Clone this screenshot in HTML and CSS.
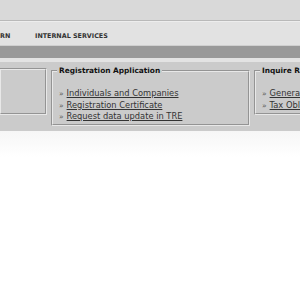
FILE: index.html
```html
<!DOCTYPE html>
<html lang="en">
  <head>
    <meta charset="UTF-8" />
    <title>Services</title>
    <link rel="stylesheet" href="styles.css">
  </head>
  <body>
    <div class="top"></div>
    <div class="nav">
      <span class="nav-item nav-cut">RN</span>
      <span class="nav-item">INTERNAL SERVICES</span>
    </div>
    <div class="band"></div>
    <div class="content">
      <div class="box box-left"></div>
      <fieldset class="box box-mid">
        <legend>Registration Application</legend>
        <ul>
          <li><a href="#">Individuals and Companies</a></li>
          <li><a href="#">Registration Certificate</a></li>
          <li><a href="#">Request data update in TRE</a></li>
        </ul>
      </fieldset>
      <fieldset class="box box-right">
        <legend>Inquire Registration</legend>
        <ul>
          <li><a href="#">General Information</a></li>
          <li><a href="#">Tax Obligations</a></li>
        </ul>
      </fieldset>
    </div>
    <div class="fade"></div>
  </body>
</html>
```

FILE: styles.css
```css
* {
  box-sizing: border-box;
  margin: 0;
  padding: 0;
}

body {
  background: #fff;
  font-family: "DejaVu Sans", Verdana, sans-serif;
  overflow: hidden;
}

.top {
  height: 21px;
  background: #d9d9d9;
  border-bottom: 1px solid #b9b9b9;
}

.nav {
  height: 25px;
  background: #e2e2e2;
  border-top: 1px solid #ededed;
  border-bottom: 1px solid #cfcfcf;
  display: flex;
  align-items: center;
  padding-top: 5px;
  font-size: 6.4px;
  font-weight: bold;
  color: #333;
  white-space: nowrap;
}

.nav-cut {
  width: 35px;
}

.band {
  height: 16px;
  background: #999;
  border-bottom: 4px solid #e3e3e3;
}

.content {
  height: 69px;
  background: #cbcbcb;
  display: flex;
  gap: 4px;
  padding-top: 4px;
  overflow: hidden;
}

.box {
  flex: none;
  border: 2px groove #e8e8e8;
  min-width: 0;
}

.box-left {
  width: 48px;
  height: 47px;
  margin-top: 2px;
  margin-left: -1px;
}

.box-mid {
  width: 199px;
  height: 60px;
  padding: 13px 0 0 6px;
}

.box-right {
  width: 120px;
  height: 49px;
  padding: 13px 0 0 6px;
}

legend {
  font-size: 7.4px;
  font-weight: bold;
  color: #111;
  padding: 0 2px;
  margin-left: -2px;
}

ul {
  list-style: none;
}

li {
  font-size: 8.3px;
  line-height: 10.5px;
  color: #555;
}

li::before {
  content: "\00bb";
  margin-right: 3px;
  font-size: 7.5px;
}

li a {
  color: #333;
}

.fade {
  height: 26px;
  background: linear-gradient(#f6f6f6, #fff);
}
```
